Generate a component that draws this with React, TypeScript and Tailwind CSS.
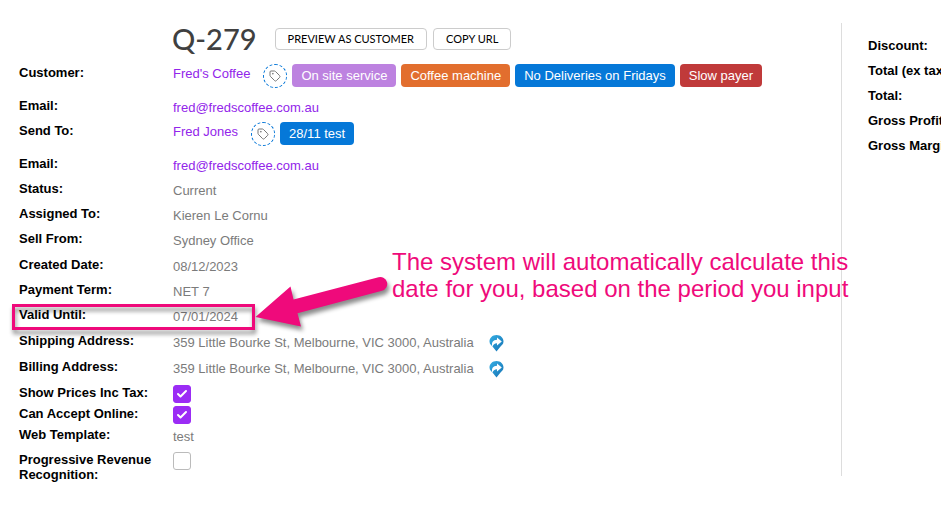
import React from 'react';
import { Check, Tag } from 'lucide-react';

interface RowProps {
  label: React.ReactNode;
  size?: string;
  valueClass?: string;
  highlight?: boolean;
  children: React.ReactNode;
}

const Row: React.FC<RowProps> = ({
  label,
  size = 'h-[25px]',
  valueClass = 'pt-[3px]',
  highlight = false,
  children,
}) => (
  <div className={`relative flex items-start ${size}`}>
    <dt className="w-[154px] shrink-0 pt-px font-bold leading-[15px] text-black">{label}</dt>
    <dd className={`flex items-start leading-[15px] text-[#7b7b7b] ${valueClass}`}>{children}</dd>
    {highlight && (
      <div className="pointer-events-none absolute -left-[7px] -top-[2px] h-[26px] w-[243px] border-3 border-[#ef0a7b] drop-shadow-[1px_4px_2px_rgba(0,0,0,0.45)]" />
    )}
  </div>
);

const TagButton: React.FC = () => (
  <button
    type="button"
    aria-label="Edit tags"
    className="flex size-6 shrink-0 items-center justify-center rounded-full border border-dashed border-[#0878d8] text-[#777]"
  >
    <Tag className="size-3" strokeWidth={2} />
  </button>
);

const Badge: React.FC<{ color: string; children: React.ReactNode }> = ({ color, children }) => (
  <span className={`flex h-[23px] items-center whitespace-nowrap rounded px-[9px] text-white ${color}`}>
    {children}
  </span>
);

const CheckBox: React.FC<{ id: string; defaultChecked?: boolean }> = ({ id, defaultChecked }) => (
  <span className="relative block size-[18px]">
    <input
      id={id}
      type="checkbox"
      defaultChecked={defaultChecked}
      className="peer block size-[18px] appearance-none rounded-[3px] border border-[#bbb] bg-white checked:border-[#9b2cf5] checked:bg-[#9b2cf5]"
    />
    <Check
      className="pointer-events-none absolute left-[3px] top-[3px] hidden size-3 text-white peer-checked:block"
      strokeWidth={4}
    />
  </span>
);

const MapLink: React.FC = () => (
  <a href="#map" aria-label="Open map" className="ml-[15px] block">
    <svg width="15" height="17" viewBox="0 0 15 17">
      <defs>
        <linearGradient id="pin" x1="0" y1="0" x2="1" y2="1">
          <stop offset="0" stopColor="#35aee4" />
          <stop offset="1" stopColor="#1673b4" />
        </linearGradient>
      </defs>
      <path
        d="M7.500 0C3.400 0 .5 2.900 .5 6.600c0 2.900 2.200 4 3.800 5.800L7.500 16.500l3.200-4.100c1.600-1.800 3.800-2.900 3.800-5.800C14.500 2.900 11.600 0 7.500 0Z"
        fill="url(#pin)"
      />
      <path
        d="M3.600 12C1.800 7.800 4 4.700 8 4.700V2.500l4.800 4-4.800 4V8.200C5.600 8.200 4 9.400 3.600 12Z"
        fill="#fff"
      />
    </svg>
  </a>
);

const Link: React.FC<{ href: string; children: React.ReactNode }> = ({ href, children }) => (
  <a href={href} className="whitespace-nowrap text-[#9225ea]">
    {children}
  </a>
);

const headerButton =
  'h-[22px] whitespace-nowrap rounded border border-[#ccc] bg-white px-3 font-[Lato,sans-serif] text-[11px] leading-5 text-black';

const totals = ['Discount:', 'Total (ex tax):', 'Total:', 'Gross Profit:', 'Gross Margin:'];

const App: React.FC = () => {
  const address = '359 Little Bourke St, Melbourne, VIC 3000, Australia';

  return (
    <div className="relative min-h-screen overflow-hidden bg-white font-['Liberation_Sans',Arial,sans-serif] text-[13px]">
      <div className="flex pt-[23px]">
        <main className="min-w-0 flex-1 pl-[19px]">
          <header className="flex h-[41px] items-start pl-[153px]">
            <h1 className="font-[Lato,sans-serif] text-[29px] font-medium leading-8 text-[#404040]">Q-279</h1>
            <div className="ml-[18px] flex gap-[6px] pt-[5px]">
              <button type="button" className={headerButton}>PREVIEW AS CUSTOMER</button>
              <button type="button" className={headerButton}>COPY URL</button>
            </div>
          </header>

          <dl>
            <Row label="Customer:" size="h-[33px]" valueClass="">
              <div className="pt-[2px]"><Link href="#customer">Fred's Coffee</Link></div>
              <div className="ml-[13px] flex gap-[5px]">
                <TagButton />
                <Badge color="bg-[#bd82e0]">On site service</Badge>
                <Badge color="bg-[#e26e2e]">Coffee machine</Badge>
                <Badge color="bg-[#0578d8]">No Deliveries on Fridays</Badge>
                <Badge color="bg-[#c03a3a]">Slow payer</Badge>
              </div>
            </Row>
            <Row label="Email:">
              <Link href="mailto:fred@fredscoffee.com.au">fred@fredscoffee.com.au</Link>
            </Row>
            <Row label="Send To:" size="h-[33px]" valueClass="">
              <div className="pt-[2px]"><Link href="#contact">Fred Jones</Link></div>
              <div className="ml-[13px] flex gap-[5px]">
                <TagButton />
                <Badge color="bg-[#0578d8]">28/11 test</Badge>
              </div>
            </Row>
            <Row label="Email:">
              <Link href="mailto:fred@fredscoffee.com.au">fred@fredscoffee.com.au</Link>
            </Row>
            <Row label="Status:">Current</Row>
            <Row label="Assigned To:">Kieren Le Cornu</Row>
            <Row label="Sell From:" size="h-[26px]">Sydney Office</Row>
            <Row label="Created Date:">08/12/2023</Row>
            <Row label="Payment Term:">NET 7</Row>
            <Row label="Valid Until:" size="h-[26px]" highlight>07/01/2024</Row>
            <Row label="Shipping Address:" size="h-[26px]">{address}<MapLink /></Row>
            <Row label="Billing Address:" size="h-[26px]">{address}<MapLink /></Row>
            <Row label={<label htmlFor="incTax">Show Prices Inc Tax:</label>} size="h-[21px]" valueClass="pt-px">
              <CheckBox id="incTax" defaultChecked />
            </Row>
            <Row label={<label htmlFor="online">Can Accept Online:</label>} size="h-[21px]" valueClass="pt-px">
              <CheckBox id="online" defaultChecked />
            </Row>
            <Row label="Web Template:">test</Row>
            <Row label={<label htmlFor="revenue">Progressive Revenue Recognition:</label>} size="h-[31px]" valueClass="pt-px">
              <CheckBox id="revenue" />
            </Row>
          </dl>
        </main>

        <aside className="h-[453px] w-[100px] shrink-0 border-l border-[#ddd] pl-[26px] pt-[15px]">
          <ul className="whitespace-nowrap font-bold leading-[15px] text-black">
            {totals.map((label) => (
              <li key={label} className="h-[25px]">{label}</li>
            ))}
          </ul>
        </aside>
      </div>

      {/* Annotation */}
      <svg
        className="pointer-events-none absolute left-[250px] top-[270px] drop-shadow-[2px_4px_2px_rgba(0,0,0,0.45)]"
        width="145"
        height="65"
        viewBox="0 0 145 65"
      >
        <path
          d="M5.500 47 40.500 16.500 43.500 29.500 128.500 7.200a6.800 6.800 0 0 1 3.500 13.600L47.500 43.200l3.500 13.300Z"
          fill="#ef0a7b"
        />
      </svg>
      <p className="absolute left-[392px] top-[248px] whitespace-nowrap text-[24px] leading-[27px] text-[#ef0a7b]">
        The system will automatically calculate this
        <br />
        date for you, based on the period you input
      </p>
    </div>
  );
};

export default App;
